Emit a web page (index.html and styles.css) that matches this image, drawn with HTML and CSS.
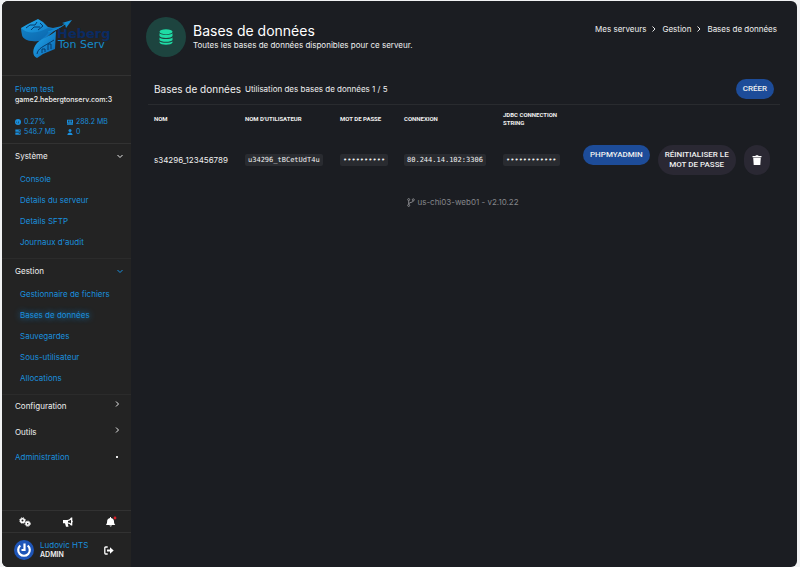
FILE: index.html
```html
<!DOCTYPE html>
<html lang="fr">
  <head>
    <meta charset="utf-8">
    <title>Bases de données</title>
    <link rel="stylesheet" href="styles.css">
  </head>

  <body>
    <div class="app">
      <aside class="sidebar">
        <a class="logo" href="#" aria-label="Heberg Ton Serv">
          <svg viewBox="0 0 95 44" width="95" height="44">
            <defs>
              <linearGradient id="blue" x1="0" y1="0" x2="1" y2="1">
                <stop offset="0" stop-color="#22aef0"/>
                <stop offset="1" stop-color="#0a61ae"/>
              </linearGradient>
            </defs>
            <text class="logo-heberg" x="37" y="22">Heberg</text>
            <text class="logo-tonserv" x="38" y="32">Ton Serv</text>
            <path fill="url(#blue)" d="M1 12 L8 8 L18 3 L23 6 L28 11 L33 12 L42 10 L36 14 C30 17 25 25 18 25 C9 26 3 23 2 19 Z"/>
            <path fill="#0862a5" d="M1 12 C7 18 16 18 28 12 L33 13 C26 18 23 24 18 25 C9 26 3 23 2 19 Z" opacity=".5"/>
            <path fill="url(#blue)" d="M36 15 L35 33 L23 38 L17 42 C12 40 12 33 17 27 C22 22 29 21 36 15 Z"/>
            <path fill="none" stroke="#073a6b" stroke-width="1" d="M6 12 L10 9 L15 9 L17 6 M11 14 L14 11 L20 11 M18 14 L23 10 L20 7 M17 38 C18 32 23 31 34 24 M22 37 V33 H25 V36 M28 34 V28 H31 V33"/>
            <path fill="#128bd0" d="M42 7 L52 4 L46 12 L45 8 Z"/>
            <path fill="none" stroke="#128bd0" d="M28 16 C35 14 40 12 45 8"/>
          </svg>
        </a>

        <div class="server">
          <a class="server-name" href="#">Fivem test</a>
          <div class="server-address">game2.hebergtonserv.com:3</div>
          <div class="stats">
            <span><svg class="stat-icon" viewBox="0 0 16 16"><circle cx="8" cy="8" r="8"/><path class="cut" d="M7 11 L11 4 L9 12 Z M3 7h2v2H3z"/></svg>0.27%</span>
            <span><svg class="stat-icon" viewBox="0 0 16 16"><path d="M0 2h16v9H0zM0 12h16v3H0z"/><path class="cut" d="M3 4h2v5H3zM7 4h2v5H7zM11 4h2v5h-2z"/></svg>288.2 MB</span>
            <span><svg class="stat-icon" viewBox="0 0 16 16"><path d="M1 1h14v6H1zM1 9h14v6H1z"/><path class="cut" d="M10 3h3v2h-3zM10 11h3v2h-3z"/></svg>548.7 MB</span>
            <span><svg class="stat-icon" viewBox="0 0 16 16"><circle cx="8" cy="4" r="4"/><path d="M1 16c0-9 14-9 14 0z"/></svg>0</span>
          </div>
        </div>

        <nav class="menu">
          <div class="group">
            <button class="group-title" type="button">Système <svg class="chevron" viewBox="0 0 6 6"><path d="M.5 2 3 4.500 5.500 2"/></svg></button>
            <a href="#">Console</a>
            <a href="#">Détails du serveur</a>
            <a href="#">Details SFTP</a>
            <a href="#">Journaux d'audit</a>
          </div>
          <div class="group">
            <button class="group-title" type="button">Gestion <svg class="chevron blue" viewBox="0 0 6 6"><path d="M.5 2 3 4.500 5.500 2"/></svg></button>
            <a href="#">Gestionnaire de fichiers</a>
            <a class="active" href="#">Bases de données</a>
            <a href="#">Sauvegardes</a>
            <a href="#">Sous-utilisateur</a>
            <a href="#">Allocations</a>
          </div>
          <div class="closed">
            <button class="group-title" type="button">Configuration <svg class="chevron" viewBox="0 0 6 6"><path d="M2 .5 4.500 3 2 5.500"/></svg></button>
            <button class="group-title" type="button">Outils <svg class="chevron" viewBox="0 0 6 6"><path d="M2 .5 4.500 3 2 5.500"/></svg></button>
            <a class="admin" href="#">Administration <span class="dot"></span></a>
          </div>
        </nav>

        <div class="tools">
          <button type="button" aria-label="Paramètres">
            <svg width="12" height="10" viewBox="0 0 12 10">
              <g fill="none" stroke="#fff">
                <circle cx="3.5" cy="3.5" r="1.8" stroke-width="1.6"/>
                <circle cx="3.5" cy="3.5" r="2.8" stroke-dasharray="1.2 1"/>
                <circle cx="8.7" cy="6.7" r="1.6" stroke-width="1.6"/>
                <circle cx="8.7" cy="6.7" r="2.6" stroke-dasharray="1.2 .9"/>
              </g>
            </svg>
          </button>
          <button type="button" aria-label="Annonces">
            <svg width="10" height="10" viewBox="0 0 10 10"><path fill="#fff" fill-rule="evenodd" d="M0 3h4c2 0 3-1 4-2.500h1.300v3q1 .8 0 2V8.500H8C7 7 6 6.500 4.700 6.400L5.500 9.700H3L2 6.300H0zM5 4v1.500q1.800.2 3 1.100V2.800Q6.800 3.800 5 4z"/></svg>
          </button>
          <button type="button" aria-label="Notifications">
            <svg width="12" height="12" viewBox="0 0 12 12"><path fill="#fff" d="M5 2V1h1v1c2 .3 3 1.800 3 3.500 0 1.500.5 2.500 1.300 3.500H1c.6-1 1.100-2 1.100-3.500C2.100 3.800 3 2.300 5 2zM4.300 9.600h2.800q-1.400 2-2.800 0z"/><circle cx="10" cy="2" r="1.400" fill="#d81e28"/></svg>
          </button>
        </div>

        <div class="user">
          <svg class="avatar" viewBox="0 0 20 20"><circle cx="10" cy="10" r="10" fill="#1e55b8"/><path fill="none" stroke="#fff" stroke-width="2.200" d="M6.300 5.500 A5.800 5.800 0 1 0 13.700 5.500 M10.500 3.500V10H7.500"/></svg>
          <div class="user-text">
            <a href="#">Ludovic HTS</a>
            <strong>ADMIN</strong>
          </div>
          <button type="button" aria-label="Déconnexion">
            <svg width="10" height="9" viewBox="0 0 10 9"><path fill="none" stroke="#fff" stroke-width="1.300" d="M3.700 1H1.600Q.8 1 .8 2v5q0 1 .8 1h2.100"/><path fill="#fff" d="M3 3.500h3V1.300L9.700 4.500 6 7.700V5.500H3z"/></svg>
          </button>
        </div>
      </aside>

      <main class="main">
        <header class="page-header">
          <div class="page-icon">
            <svg width="14" height="16" viewBox="0 0 14 16" fill="#1fdba5">
              <ellipse cx="7" cy="2.700" rx="6.500" ry="2.500"/>
              <path d="M.5 4.200c2 2 11 2 13 0V7c-1 2.600-12 2.600-13 0z"/>
              <path d="M.5 8.400c2 2 11 2 13 0V11c-1 2.400-12 2.400-13 0z"/>
              <path d="M.5 12.400c2 1.800 11 1.800 13 0v1c-1 3-12 3-13 0z"/>
            </svg>
          </div>
          <div class="page-title">
            <h1>Bases de données</h1>
            <p>Toutes les bases de données disponibles pour ce serveur.</p>
          </div>
          <nav class="breadcrumb">
            <a href="#">Mes serveurs</a>
            <svg class="chevron" viewBox="0 0 6 6"><path d="M1.500 .5 4 3 1.500 5.500"/></svg>
            <a href="#">Gestion</a>
            <svg class="chevron" viewBox="0 0 6 6"><path d="M1.500 .5 4 3 1.500 5.500"/></svg>
            <span>Bases de données</span>
          </nav>
        </header>

        <section class="databases">
          <div class="section-header">
            <h2>Bases de données</h2>
            <p>Utilisation des bases de données 1 / 5</p>
            <button class="btn btn-primary" type="button">CRÉER</button>
          </div>
          <table>
            <colgroup>
              <col class="col-name">
              <col class="col-user">
              <col class="col-pass">
              <col class="col-host">
              <col class="col-jdbc">
              <col>
            </colgroup>
            <thead>
              <tr>
                <th>NOM</th>
                <th>NOM D'UTILISATEUR</th>
                <th>MOT DE PASSE</th>
                <th>CONNEXION</th>
                <th>JDBC CONNECTION STRING</th>
                <th></th>
              </tr>
            </thead>
            <tbody>
              <tr>
                <td>s34296_123456789</td>
                <td><code>u34296_tBCetUdT4u</code></td>
                <td><code>••••••••••</code></td>
                <td><code>80.244.14.102:3306</code></td>
                <td><code>••••••••••••</code></td>
                <td>
                  <div class="actions">
                    <button class="btn btn-primary" type="button">PHPMYADMIN</button>
                    <button class="btn btn-dark" type="button">RÉINITIALISER LE<br>MOT DE PASSE</button>
                    <button class="btn btn-dark btn-delete" type="button" aria-label="Supprimer">
                      <svg width="10" height="10" viewBox="0 0 10 10" fill="#fff"><path d="M.5 1H3.300L4 .2h2L6.700 1h2.800v1.200h-9zM1.200 2.800h7.600L8.300 10H1.700z"/></svg>
                    </button>
                  </div>
                </td>
              </tr>
            </tbody>
          </table>
        </section>

        <footer class="version">
          <svg width="8" height="9" viewBox="0 0 8 9" fill="none" stroke="#85868a"><circle cx="1.700" cy="1.600" r="1"/><circle cx="1.700" cy="7.400" r="1"/><circle cx="6.300" cy="1.800" r="1"/><path d="M1.700 2.600v3.800M6.300 2.800c0 2-4.600 1.200-4.600 3.200"/></svg>
          us-chi03-web01 - v2.10.22
        </footer>
      </main>
    </div>
  </body>
</html>
```

FILE: styles.css
```css
* {
  box-sizing: border-box;
}
body {
  margin: 0;
  padding: 1px 3px 0 2px;
  background-color: #f1f2f3;
  font-family: Inter, "Liberation Sans", sans-serif;
  font-size: 8px;
  line-height: 10px;
  color: #f0f0f0;
}
h1, h2, p {
  margin: 0;
  font-weight: 400;
}
a {
  color: #1a8fdd;
  text-decoration: none;
}
button {
  padding: 0;
  border: 0;
  background: none;
  color: inherit;
  font: inherit;
  cursor: pointer;
}
svg {
  display: block;
  flex-shrink: 0;
}
.app {
  display: flex;
  min-height: calc(100vh - 1px);
  border-radius: 6px;
  overflow: hidden;
  background-color: #1b1d22;
}
.chevron {
  width: 6px;
  height: 6px;
  fill: none;
  stroke: #e8e8e8;
  overflow: visible;
}
.chevron.blue {
  stroke: #1a8fdd;
}

/* sidebar */
.sidebar {
  display: flex;
  flex-direction: column;
  flex-shrink: 0;
  width: 129px;
  background-color: #232323;
}
.logo {
  padding: 15px 16px 15px 18px;
  border-bottom: 1px solid #323232;
}
.logo-heberg {
  font-family: "DejaVu Sans", sans-serif;
  font-size: 13px;
  font-weight: 700;
  fill: #0a2b63;
}
.logo-tonserv {
  font-family: "DejaVu Sans", sans-serif;
  font-size: 11px;
  fill: #168bc9;
}
.server {
  padding: 8px 12px 6px 13px;
  border-bottom: 1px solid #323232;
}
.server-name {
  display: block;
}
.server-address {
  margin-top: 1px;
  font-size: 7px;
  font-weight: 500;
  white-space: nowrap;
}
.stats {
  display: grid;
  grid-template-columns: 52px 1fr;
  margin-top: 12px;
  font-size: 7px;
  color: #1a8fdd;
}
.stats span {
  display: flex;
  align-items: center;
  gap: 3px;
}
.stat-icon {
  width: 6px;
  height: 6px;
  fill: #1a8fdd;
}
.stat-icon .cut {
  fill: #232323;
}
.menu {
  flex: 1;
}
.menu a {
  display: block;
  padding: 5px 18px 6px;
}
.menu a.active {
  text-shadow: 0 0 6px #1a8fdd;
}
.group {
  padding-bottom: 5px;
  border-bottom: 1px solid #2b2b2b;
}
.group-title {
  display: flex;
  align-items: center;
  justify-content: space-between;
  width: 100%;
  height: 25px;
  padding: 7px 8px 8px 13px;
}
.closed .group-title {
  align-items: flex-start;
  height: 26px;
  padding: 6px 11px 10px 13px;
}
.menu .admin {
  display: flex;
  align-items: center;
  justify-content: space-between;
  padding: 5px 13px;
}
.dot {
  width: 2px;
  height: 2px;
  background-color: #e8e8e8;
}
.tools {
  display: flex;
  justify-content: space-between;
  align-items: center;
  height: 22px;
  padding: 0 14px 0 17px;
  border-top: 1px solid #323232;
}
.user {
  display: flex;
  align-items: center;
  height: 35px;
  padding: 0 17px 0 12px;
  border-top: 1px solid #323232;
}
.avatar {
  width: 20px;
  height: 20px;
}
.user-text {
  flex: 1;
  margin-left: 6px;
}
.user-text a {
  display: block;
}
.user-text strong {
  display: block;
  font-size: 7px;
  font-weight: 600;
}

/* content */
.main {
  flex: 1;
  padding: 16px 17px 0 15px;
}
.page-header {
  display: flex;
  align-items: flex-start;
}
.page-icon {
  display: flex;
  align-items: center;
  justify-content: center;
  width: 40px;
  height: 40px;
  border-radius: 50%;
  background-color: #1d443f;
}
.page-title {
  flex: 1;
  padding-top: 5px;
  margin-left: 7px;
}
.page-title h1 {
  font-size: 14px;
  line-height: 18px;
  color: #fff;
}
.breadcrumb {
  display: flex;
  align-items: center;
  gap: 5px;
  padding: 7px 3px 0 0;
}
.breadcrumb a {
  color: inherit;
}
.databases {
  margin: 16px 0 0 2px;
}
.section-header {
  display: flex;
  align-items: center;
  height: 32px;
  padding: 0 6px;
  border-bottom: 1px solid #292b2f;
}
.section-header h2 {
  margin-right: 4px;
  font-size: 10px;
  line-height: 14px;
}
.section-header .btn {
  margin-left: auto;
}
.btn {
  padding: 5px 7px;
  border-radius: 16px;
  font-family: Roboto, "Liberation Sans", sans-serif;
  font-weight: 500;
  white-space: nowrap;
}
.btn-primary {
  background-color: #1d4c99;
}
.btn-dark {
  background-color: #2a2833;
}
table {
  width: 100%;
  table-layout: fixed;
  border-collapse: collapse;
}
.col-name {
  width: 91px;
}
.col-user {
  width: 95px;
}
.col-pass {
  width: 64px;
}
.col-host {
  width: 99px;
}
.col-jdbc {
  width: 80px;
}
th {
  height: 28px;
  padding: 0 6px;
  font-family: Roboto, "Liberation Sans", sans-serif;
  font-size: 6px;
  line-height: 8px;
  font-weight: 700;
  text-align: left;
}
td {
  height: 54px;
  padding: 0 0 0 6px;
  white-space: nowrap;
}
code {
  display: inline-block;
  padding: 1px 3px;
  border-radius: 2px;
  background-color: #292b30;
  font-family: "DejaVu Sans Mono", monospace;
  font-size: 7px;
}
.actions {
  display: flex;
  align-items: flex-start;
  gap: 8px;
}
.btn-delete {
  align-self: stretch;
  padding: 0 8px;
}
.version {
  display: flex;
  align-items: center;
  justify-content: center;
  gap: 2px;
  margin-top: 10px;
  color: #85868a;
}
```
